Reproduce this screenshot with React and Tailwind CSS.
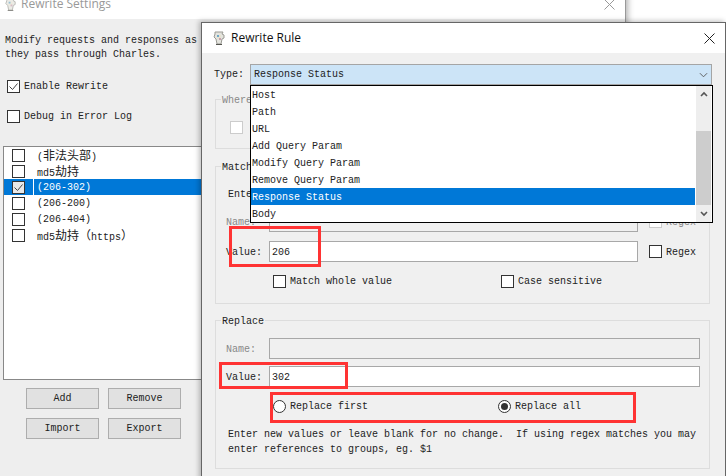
import React from 'react';

const mono = 'font-["Liberation_Mono",monospace] text-[10px] leading-[12px] text-[#222]';

const rules = [
  { id: 1, text: <>(<Cjk>非法头部</Cjk>)</> },
  { id: 2, text: <>md5<Cjk>劫持</Cjk></> },
  { id: 3, text: '(206-302)', checked: true },
  { id: 4, text: '(206-200)' },
  { id: 5, text: '(206-404)' },
  { id: 6, text: <>md5<Cjk>劫持（</Cjk>https<Cjk>）</Cjk></> },
];

const types = ['Host', 'Path', 'URL', 'Add Query Param', 'Modify Query Param', 'Remove Query Param', 'Response Status', 'Body'];

function Cjk({ children }) {
  return <span className='font-["Noto_Sans_CJK_SC",sans-serif] text-[12px]'>{children}</span>;
}

const Jug = ({ className }) => (
  <svg className={className} viewBox="0 0 14 16">
    <path d="M3 2h8l-1 2 2 1v3l-2 1-1 5H5L4 9 2 7l1-3z" fill="#e4e4de" stroke="#9a9a94" />
    <path d="M5 5h4v4H5z" fill="#e6e2d0" />
    <path d="M5 5h2v2H5z" fill="#6fa8c8" />
    <path d="M7 8h2v2H7z" fill="#c8a0b0" />
    <path d="M4 14h6v1H4z" fill="#55554f" />
  </svg>
);

const CheckBox = ({ checked, disabled, className = '' }) => (
  <span className={`block w-[13px] h-[13px] shrink-0 border ${disabled ? 'border-[#ccc]' : 'border-[#333]'} bg-white ${className}`}>
    {checked && (
      <svg viewBox="0 0 11 11" className="block w-[11px] h-[11px]">
        <path d="M1.5 5.5 4.5 8.5 9.5 2.5" fill="none" stroke="#444" strokeWidth="1" />
      </svg>
    )}
  </span>
);

const Radio = ({ checked }) => (
  <span className="flex items-center justify-center w-[13px] h-[13px] shrink-0 rounded-full border border-[#333] bg-white">
    {checked && <span className="block w-[7px] h-[7px] rounded-full bg-[#333]" />}
  </span>
);

const Button = ({ children }) => (
  <div className="flex items-center justify-center w-[73px] h-[21px] bg-[#e1e1e1] border border-[#adadad]">{children}</div>
);

const Field = ({ value, disabled, className = '' }) => (
  <div className={`h-[21px] border border-[#a8a8a8] pl-[2px] pt-[2px] flex items-center ${disabled ? 'bg-[#f0f0f0]' : 'bg-white'} ${className}`}>
    {value}
  </div>
);

const GroupLabel = ({ children, className = '' }) => (
  <span className={`absolute top-[-5px] left-[5px] px-[1px] bg-[#f0f0f0] ${className}`}>{children}</span>
);

// the window behind, only its left part is showing
const SettingsWindow = () => (
  <div className={`absolute left-0 top-[-16px] w-[626px] h-[492px] flex flex-col border-r border-[#999] shadow-[2px_0_6px_rgba(0,0,0,0.3)] ${mono}`}>
    <div className="h-[35px] shrink-0 bg-white flex items-center pt-[5px] pl-[4px] pr-[10px]">
      <Jug className="w-[13px] h-[15px] opacity-70" />
      <span className='ml-[4px] font-["Open_Sans",sans-serif] text-[12px] text-[#999]'>Rewrite Settings</span>
      <svg viewBox="0 0 11 11" className="ml-auto w-[11px] h-[11px]">
        <path d="M.5.5l10 10M10.5.5l-10 10" stroke="#999" fill="none" />
      </svg>
    </div>
    <div className="flex-1 bg-[#eee] pt-[15px]">
      <p className="pl-[5px] leading-[14px]">
        Modify requests and responses as
        <br />
        they pass through Charles.
      </p>
      <div className="flex items-center gap-[4px] pl-[7px] mt-[18px]">
        <CheckBox checked />
        <span>Enable Rewrite</span>
      </div>
      <div className="flex items-center gap-[4px] pl-[7px] mt-[17px]">
        <CheckBox />
        <span>Debug in Error Log</span>
      </div>
      <div className="ml-[3px] mr-[3px] mt-[23px] h-[234px] border border-[#888] bg-white">
        {rules.map((rule) => (
          <div key={rule.id} className={`flex items-center h-[16px] ${rule.checked ? 'bg-[#0078d7] text-white' : ''}`}>
            <div className={`flex items-center w-[30px] h-full pl-[8px] shrink-0 ${rule.checked ? 'border-r border-white' : ''}`}>
              <CheckBox checked={rule.checked} className={rule.checked ? '!bg-[#e8e8e8]' : ''} />
            </div>
            <span className="ml-[3px] mt-[2px] whitespace-pre">{rule.text}</span>
          </div>
        ))}
      </div>
      <div className="grid grid-cols-[73px_73px] gap-x-[9px] gap-y-[9px] ml-[26px] mt-[8px]">
        <Button>Add</Button>
        <Button>Remove</Button>
        <Button>Import</Button>
        <Button>Export</Button>
      </div>
    </div>
  </div>
);

const RuleWindow = () => (
  <div className={`absolute left-[201px] top-[22px] w-[525px] h-[460px] flex flex-col border border-[#666] shadow-[-2px_-1px_5px_rgba(0,0,0,0.25)] ${mono}`}>
    <div className="h-[30px] shrink-0 bg-white flex items-center pl-[10px] pr-[10px]">
      <Jug className="w-[14px] h-[16px]" />
      <span className='ml-[5px] font-["Open_Sans",sans-serif] text-[12px] text-[#111]'>Rewrite Rule</span>
      <svg viewBox="0 0 11 11" className="ml-auto w-[11px] h-[11px]">
        <path d="M.5.5l10 10M10.5.5l-10 10" stroke="#222" fill="none" />
      </svg>
    </div>
    <div className="flex-1 bg-[#f0f0f0] pt-[11px] pl-[12px] pr-[13px]">
      <div className="flex items-center">
        <span className="w-[36px] shrink-0">Type:</span>
        <div className="flex-1 h-[21px] bg-[#cce4f7] border border-[#a5a5a5] flex items-center pl-[3px] pr-[3px]">
          <span>Response Status</span>
          <svg viewBox="0 0 10 6" className="ml-auto w-[9px] h-[6px]">
            <path d="M1 1l4 4 4-4" fill="none" stroke="#555" />
          </svg>
        </div>
      </div>

      <div className="relative ml-[1px] mr-[2px] mt-[14px] h-[50px] border border-[#ddd]">
        <GroupLabel className="text-[#888]">Where</GroupLabel>
        <CheckBox disabled className="mt-[21px] ml-[14px]" />
      </div>

      <div className="relative ml-[1px] mr-[2px] mt-[17px] h-[138px] border border-[#ddd] pt-[22px]">
        <GroupLabel>Match</GroupLabel>
        <div className="pl-[12px] h-[12px]">Enter</div>
        <div className="flex items-center mt-[10px] pl-[10px]">
          <span className="w-[43px] pt-[2px] text-[#888]">Name:</span>
          <Field disabled className="w-[369px]" />
          <CheckBox disabled className="ml-[11px]" />
          <span className="ml-[4px] pt-[2px] text-[#888]">Regex</span>
        </div>
        <div className="flex items-center mt-[9px] pl-[10px]">
          <span className="w-[43px] pt-[2px]">Value:</span>
          <Field value="206" className="w-[369px]" />
          <CheckBox className="ml-[11px]" />
          <span className="ml-[4px] pt-[2px]">Regex</span>
        </div>
        <div className="flex items-center mt-[13px] pl-[57px]">
          <CheckBox />
          <span className="ml-[4px] w-[211px]">Match whole value</span>
          <CheckBox />
          <span className="ml-[4px]">Case sensitive</span>
        </div>
      </div>

      <div className="relative ml-[1px] mr-[2px] mt-[16px] h-[149px] border border-[#ddd] pt-[17px]">
        <GroupLabel>Replace</GroupLabel>
        <div className="flex items-center pl-[10px]">
          <span className="w-[43px] pt-[2px] text-[#888]">Name:</span>
          <Field disabled className="w-[431px]" />
        </div>
        <div className="flex items-center mt-[7px] pl-[10px]">
          <span className="w-[43px] pt-[2px]">Value:</span>
          <Field value="302" className="w-[431px]" />
        </div>
        <div className="flex items-center mt-[12px] pl-[57px]">
          <Radio />
          <span className="ml-[4px] pt-[2px] w-[208px]">Replace first</span>
          <Radio checked />
          <span className="ml-[4px] pt-[2px]">Replace all</span>
        </div>
        <p className="mt-[14px] pl-[12px] leading-[15px] whitespace-pre">
          Enter new values or leave blank for no change.  If using regex matches you may
          <br />
          enter references to groups, eg. $1
        </p>
      </div>
    </div>
  </div>
);

// open list of the Type combo box
const TypeMenu = () => (
  <div className={`absolute left-[250px] top-[85px] w-[463px] h-[138px] flex border border-black bg-white ${mono}`}>
    <div className="flex-1">
      {types.map((type) => (
        <div key={type} className={`h-[17px] pl-[1px] pt-[2px] flex items-center ${type === 'Response Status' ? 'bg-[#0078d7] text-white mr-[1px]' : ''}`}>
          {type}
        </div>
      ))}
    </div>
    <div className="w-[15px] mr-[1px] flex flex-col bg-[#eee]">
      <div className="h-[16px] flex items-center justify-center">
        <svg viewBox="0 0 8 6" className="w-[8px] h-[6px]">
          <path d="M1 5l3-3 3 3" fill="none" stroke="#555" strokeWidth="1.6" />
        </svg>
      </div>
      <div className="h-[29px]" />
      <div className="h-[74px] bg-[#cdcdcd]" />
      <div className="flex-1 flex items-center justify-center">
        <svg viewBox="0 0 8 6" className="w-[8px] h-[6px]">
          <path d="M1 1l3 3 3-3" fill="none" stroke="#555" strokeWidth="1.6" />
        </svg>
      </div>
    </div>
  </div>
);

const Mark = ({ className }) => <div className={`absolute border-[3px] border-[#f33] ${className}`} />;

export default function App() {
  return (
    <div className="relative w-[726px] h-[476px] overflow-hidden bg-white">
      <SettingsWindow />
      <RuleWindow />
      <TypeMenu />
      <Mark className="left-[229px] top-[226px] w-[92px] h-[41px]" />
      <Mark className="left-[219px] top-[362px] w-[129px] h-[27px]" />
      <Mark className="left-[270px] top-[392px] w-[366px] h-[31px]" />
    </div>
  );
}
